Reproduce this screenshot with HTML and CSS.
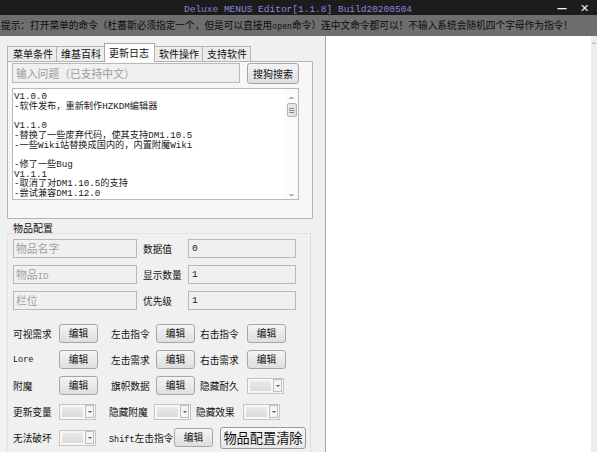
FILE: index.html
```html
<!DOCTYPE html>
<html lang="zh">
<head>
<meta charset="utf-8">
<title>Deluxe MENUS Editor</title>
<link rel="stylesheet" href="styles.css">
</head>
<body>
<div class="window">
  <div class="titlebar">
    <span class="title">Deluxe MENUS Editor[1.1.8] Build20200504</span>
    <span class="wctl min">—</span>
    <span class="wctl close">✕</span>
  </div>
  <div class="hint">提示：打开菜单的命令（杜蕃斯必须指定一个，但是可以直接用<span class="lat">open</span>命令）连中文命令都可以！不输入系统会随机四个字母作为指令！</div>
  <div class="main">
    <div class="left">
      <div class="tabs">
        <span class="tab">菜单条件</span>
        <span class="tab">维基百科</span>
        <span class="tab active">更新日志</span>
        <span class="tab">软件操作</span>
        <span class="tab">支持软件</span>
      </div>
      <div class="tabpanel">
        <div class="searchrow">
          <div class="search">输入问题（已支持中文）</div>
          <div class="btn sbtn">搜狗搜索</div>
        </div>
        <div class="log">
          <div class="logtext">
            <div>V1.0.0</div>
            <div>-软件发布，重新制作HZKDM编辑器</div>
            <div>&nbsp;</div>
            <div>V1.1.0</div>
            <div>-替换了一些废弃代码，使其支持DM1.10.5</div>
            <div>-一些Wiki站替换成国内的，内置附魔Wiki</div>
            <div>&nbsp;</div>
            <div>-修了一些Bug</div>
            <div>V1.1.1</div>
            <div>-取消了对DM1.10.5的支持</div>
            <div>-尝试兼容DM1.12.0</div>
          </div>
          <div class="vscroll">
            <svg class="arr" width="11" height="8" viewBox="0 0 11 8"><path d="M3.5 5 L5.5 3 L7.5 5" fill="none" stroke="#606060" stroke-width="1"/></svg>
            <div class="thumb"><i></i><i></i><i></i></div>
            <div class="track"></div>
            <svg class="arr" width="11" height="8" viewBox="0 0 11 8"><path d="M3.5 3 L5.5 5 L7.5 3" fill="none" stroke="#606060" stroke-width="1"/></svg>
          </div>
        </div>
      </div>
      <div class="grouplabel">物品配置</div>
      <div class="group">
        <div class="frow">
          <div class="field wide">物品名字</div>
          <span class="flabel">数据值</span>
          <div class="field val">0</div>
        </div>
        <div class="frow">
          <div class="field wide">物品<span class="lat">ID</span></div>
          <span class="flabel">显示数量</span>
          <div class="field val">1</div>
        </div>
        <div class="frow">
          <div class="field wide">栏位</div>
          <span class="flabel">优先级</span>
          <div class="field val">1</div>
        </div>

        <div class="brows">
          <div class="brow">
            <span class="l1">可视需求</span><span class="btn eb">编辑</span>
            <span class="l2">左击指令</span><span class="btn eb">编辑</span>
            <span class="l3">右击指令</span><span class="btn eb">编辑</span>
          </div>
          <div class="brow">
            <span class="l1 lat">Lore</span><span class="btn eb">编辑</span>
            <span class="l2">左击需求</span><span class="btn eb">编辑</span>
            <span class="l3">右击需求</span><span class="btn eb">编辑</span>
          </div>
          <div class="brow">
            <span class="l1">附魔</span><span class="btn eb">编辑</span>
            <span class="l2">旗帜数据</span><span class="btn eb">编辑</span>
            <span class="l3">隐藏耐久</span><span class="combo"><i class="cfill"></i><i class="carrow"></i></span>
          </div>
          <div class="brow">
            <span class="l1">更新变量</span><span class="combo"><i class="cfill"></i><i class="carrow"></i></span>
            <span class="l2">隐藏附魔</span><span class="combo"><i class="cfill"></i><i class="carrow"></i></span>
            <span class="l3">隐藏效果</span><span class="combo"><i class="cfill"></i><i class="carrow"></i></span>
          </div>
          <div class="brow">
            <span class="l1">无法破坏</span><span class="combo"><i class="cfill"></i><i class="carrow"></i></span>
            <span class="l2 shift"><span class="lat">Shift</span>左击指令</span><span class="btn eb">编辑</span>
            <span class="btn big">物品配置清除</span>
          </div>
        </div>
      </div>
    </div>
    <div class="right"></div>
    <div class="rscroll">
      <svg width="6" height="6" viewBox="0 0 6 6"><path d="M1.5 4 L3 2.5 L4.5 4" fill="none" stroke="#9a9a9a" stroke-width="1"/></svg>
    </div>
  </div>
</div>
</body>
</html>
```

FILE: styles.css
```css
* { box-sizing: border-box; }
html, body { margin: 0; padding: 0; }
body {
  width: 597px;
  height: 452px;
  overflow: hidden;
  background: #f0f0f0;
  font-family: "Noto Sans CJK SC", "Liberation Sans", sans-serif;
  color: #111;
}
.window { width: 597px; height: 452px; display: flex; flex-direction: column; }

.titlebar {
  height: 15px;
  background: #1c1c1c;
  display: flex;
  align-items: center;
  position: relative;
  flex: none;
}
.title {
  margin-left: 184px;
  margin-top: 3px;
  font-family: "Liberation Mono", monospace;
  font-size: 9.5px;
  line-height: 15px;
  color: #8886dc;
  white-space: nowrap;
}
.wctl {
  color: #f2f2f2;
  font-family: "DejaVu Sans", sans-serif;
  line-height: 15px;
  position: absolute;
  top: 1px;
}
.min { left: 557px; font-size: 10px; font-weight: bold; }
.close { left: 580px; font-size: 11px; }

.hint {
  height: 21px;
  flex: none;
  background: #6e6e6e;
  color: #0c0c0c;
  font-size: 9.7px;
  line-height: 21px;
  padding-left: 1px;
  white-space: nowrap;
  overflow: hidden;
}
.lat { font-family: "Liberation Mono", monospace; font-size: 0.85em; }

.main { flex: 1; display: flex; min-height: 0; }
.left {
  width: 326px;
  flex: none;
  border-right: 1px solid #a8a8a8;
  padding: 7px 0 0 7px;
  background: #f0f0f0;
}
.right { flex: 1; background: #fff; }
.rscroll {
  width: 6px;
  flex: none;
  background: #ececec;
  display: flex;
  justify-content: center;
  padding-top: 4px;
}

.tabs { display: flex; height: 18px; align-items: flex-end; position: relative; z-index: 1; }
.tab {
  height: 15px;
  font-size: 10px;
  line-height: 14px;
  padding: 0 4px;
  border: 1px solid #b4b4b4;
  border-bottom: none;
  background: #ececec;
  margin-right: -1px;
  white-space: nowrap;
}
.tab:first-child { width: 50px; padding-left: 5px; }
.tab:nth-child(2) { width: 49px; }
.tab:nth-child(3) { width: 51px; }
.tab:nth-child(4) { width: 49px; }
.tab:nth-child(5) { width: 49px; }
.tab.active {
  height: 19px;
  background: #fff;
  line-height: 18px;
  margin-bottom: -1px;
  border-color: #a8a8a8;
}

.tabpanel {
  width: 306px;
  height: 158px;
  border: 1px solid #b4b4b4;
  background: #f7f7f7;
  padding: 1px 0 0 4px;
}
.searchrow { display: flex; align-items: flex-start; gap: 7px; }
.search {
  width: 228px;
  height: 20px;
  border: 1px solid #b9b9b9;
  background: #f0f0f0;
  color: #9b9b9b;
  font-size: 10.8px;
  line-height: 18px;
  padding-left: 3px;
  white-space: nowrap;
}
.btn {
  border: 1px solid #a6a6a6;
  border-radius: 3px;
  background: linear-gradient(#f4f4f4, #dedede);
  color: #111;
  text-align: center;
  white-space: nowrap;
  display: inline-block;
}
.sbtn { width: 52px; height: 21px; font-size: 10px; line-height: 19px; }

.log {
  margin-top: 4px;
  width: 287px;
  height: 112px;
  background: #fff;
  border: 1px solid #b9b9b9;
  display: flex;
}
.logtext {
  flex: 1;
  font-family: "Liberation Mono", "Noto Sans CJK SC", monospace;
  font-size: 9.2px;
  line-height: 9.7px;
  padding: 3px 0 0 1px;
  color: #1a1a1a;
  white-space: nowrap;
  overflow: hidden;
}
.vscroll {
  width: 13px;
  flex: none;
  display: flex;
  flex-direction: column;
  align-items: center;
  background: #fbfbfb;
  padding-top: 5px;
}
.arr { display: block; flex: none; }
.thumb {
  width: 10px;
  height: 14px;
  margin-top: 1px;
  border: 1px solid #b3b3b3;
  border-radius: 2px;
  background: linear-gradient(90deg, #ececec, #dcdcdc);
  display: flex;
  flex-direction: column;
  align-items: center;
  justify-content: center;
  gap: 1px;
}
.thumb i { display: block; width: 5px; height: 1px; background: #8a8a8a; }
.track { flex: 1; }

.grouplabel {
  font-size: 10px;
  line-height: 12px;
  margin: 3px 0 0 6px;
  height: 11px;
}
.group {
  width: 304px;
  height: 230px;
  border: 1px solid #e2e2e2;
  border-right-color: #dadada;
  padding: 5px 0 0 5px;
}
.frow { display: flex; align-items: center; height: 19px; margin-bottom: 7px; }
.field {
  height: 19px;
  border: 1px solid #b8b8b8;
  background: #f0f0f0;
  font-size: 10.8px;
  line-height: 17px;
  padding-left: 2px;
  white-space: nowrap;
}
.field.wide { width: 124px; color: #a0a0a0; }
.field.val { width: 108px; color: #222; font-size: 9.5px; font-family: "Liberation Mono", monospace; padding-left: 3px; }
.flabel { width: 51px; padding-left: 6px; font-size: 9.7px; white-space: nowrap; }

.brows { margin-top: 14px; }
.brow { display: flex; align-items: center; height: 19px; margin-bottom: 7px; font-size: 9.7px; }
.brow > span { white-space: nowrap; }
.l1 { width: 46px; }
.l2 { width: 45px; margin-left: 13px; }
.l3 { width: 47px; margin-left: 5px; }
.brow .lat { font-size: 8.5px; }
.eb { width: 39px; height: 19px; font-size: 9.7px; line-height: 17px; }
.combo {
  width: 37px;
  height: 16px;
  border: 1px solid #c4c4c4;
  background: #f8f8f8;
  display: flex;
  align-items: center;
  padding: 0 1px 0 2px;
  gap: 2px;
}
.cfill { display: block; width: 22px; height: 10px; background: linear-gradient(#eaeaea, #dadada); }
.carrow {
  display: block;
  width: 9px;
  height: 13px;
  border: 1px solid #bdbdbd;
  background: #f4f4f4;
  position: relative;
}
.carrow::after {
  content: "";
  position: absolute;
  left: 2px;
  top: 5px;
  border-left: 2px solid transparent;
  border-right: 2px solid transparent;
  border-top: 2px solid #555;
}
.l2.shift { width: 65px; }
.big {
  margin-left: 7px;
  width: 86px;
  height: 22px;
  font-size: 13.2px;
  line-height: 20px;
  border-color: #9a9a9a;
  background: linear-gradient(#f8f8f8, #e6e6e6);
}
```
